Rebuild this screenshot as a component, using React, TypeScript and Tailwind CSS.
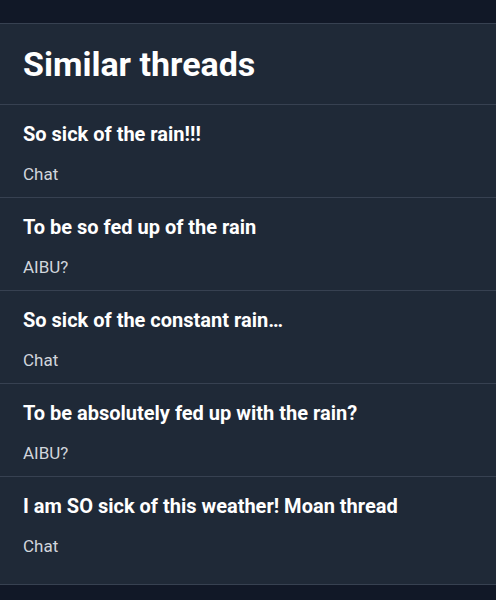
const threads = [
  { title: "So sick of the rain!!!", forum: "Chat" },
  { title: "To be so fed up of the rain", forum: "AIBU?" },
  { title: "So sick of the constant rain…", forum: "Chat" },
  { title: "To be absolutely fed up with the rain?", forum: "AIBU?" },
  { title: "I am SO sick of this weather! Moan thread", forum: "Chat" },
];

export default function App() {
  return (
    <div
      className="min-h-[600px] bg-[#111827] pt-[23px] pb-4"
      style={{ fontFamily: "Roboto, 'Liberation Sans', sans-serif" }}
    >
      <section className="bg-[#1f2937] border-y border-[#374151]">
        <h2 className="px-[23px] py-5 text-[34px] font-bold leading-10 text-white">
          Similar threads
        </h2>
        <ul>
          {threads.map((t, i) => (
            <li
              key={i}
              className={`border-t border-[#374151] px-[23px] pt-[15px] ${
                i === threads.length - 1 ? "pb-[26px]" : "pb-[11px]"
              }`}
            >
              <a className="block text-[20px] font-bold leading-7 text-white">
                {t.title}
              </a>
              <p className="mt-3.5 text-[17px] leading-6 text-gray-300">
                {t.forum}
              </p>
            </li>
          ))}
        </ul>
      </section>
    </div>
  );
}
